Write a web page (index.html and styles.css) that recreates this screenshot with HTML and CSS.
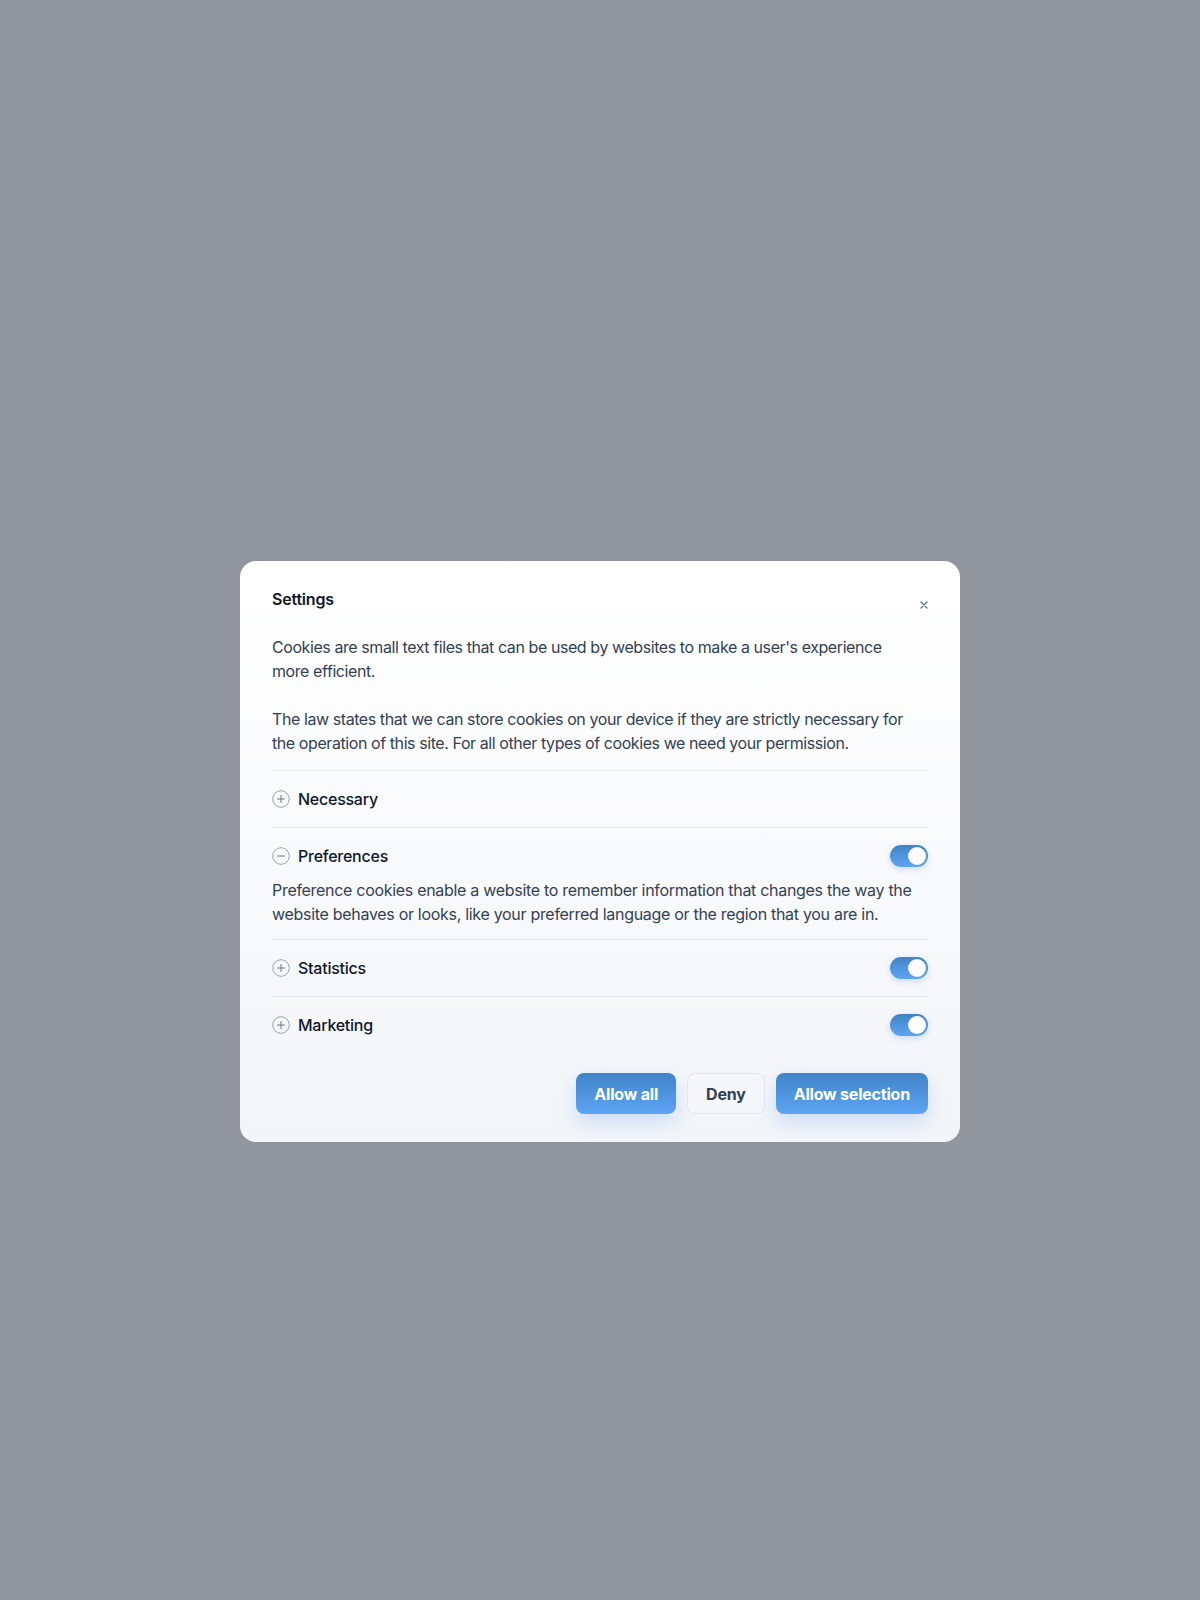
FILE: index.html
```html
<!DOCTYPE html>
<html lang="en">
<head>
    <meta charset="UTF-8">
    <meta name="viewport" content="width=device-width, initial-scale=1.0">
    <title>Cookie Settings</title>
    <link rel="stylesheet" href="styles.css">
</head>
<body>
    <div class="overlay">
        <div class="modal">
            <div class="modal-head">
                <h2 class="title">Settings</h2>
                <button class="close" aria-label="Close">
                    <svg width="8" height="8" viewBox="0 0 8 8"><path d="M1 1L7 7M7 1L1 7" stroke="#64748b" stroke-width="1.3" stroke-linecap="round"/></svg>
                </button>
            </div>

            <p class="text">Cookies are small text files that can be used by websites to make a user's experience more efficient.</p>
            <p class="text">The law states that we can store cookies on your device if they are strictly necessary for the operation of this site. For all other types of cookies we need your permission.</p>

            <div class="groups">
                <div class="group">
                    <div class="group-head">
                        <span class="toggle-icon">
                            <svg width="18" height="18" viewBox="0 0 18 18"><circle cx="9" cy="9" r="8.3" fill="none" stroke="#94a3b8" stroke-width="1"/><path d="M5.5 9H12.5M9 5.5V12.5" stroke="#64748b" stroke-width="1" stroke-linecap="round"/></svg>
                        </span>
                        <span class="label">Necessary</span>
                    </div>
                </div>

                <div class="group open">
                    <div class="group-head">
                        <span class="toggle-icon">
                            <svg width="18" height="18" viewBox="0 0 18 18"><circle cx="9" cy="9" r="8.3" fill="none" stroke="#94a3b8" stroke-width="1"/><path d="M5.5 9H12.5" stroke="#64748b" stroke-width="1" stroke-linecap="round"/></svg>
                        </span>
                        <span class="label">Preferences</span>
                        <span class="switch on"><span class="knob"></span></span>
                    </div>
                    <p class="group-desc">Preference cookies enable a website to remember information that changes the way the website behaves or looks, like your preferred language or the region that you are in.</p>
                </div>

                <div class="group">
                    <div class="group-head">
                        <span class="toggle-icon">
                            <svg width="18" height="18" viewBox="0 0 18 18"><circle cx="9" cy="9" r="8.3" fill="none" stroke="#94a3b8" stroke-width="1"/><path d="M5.5 9H12.5M9 5.5V12.5" stroke="#64748b" stroke-width="1" stroke-linecap="round"/></svg>
                        </span>
                        <span class="label">Statistics</span>
                        <span class="switch on"><span class="knob"></span></span>
                    </div>
                </div>

                <div class="group">
                    <div class="group-head">
                        <span class="toggle-icon">
                            <svg width="18" height="18" viewBox="0 0 18 18"><circle cx="9" cy="9" r="8.3" fill="none" stroke="#94a3b8" stroke-width="1"/><path d="M5.5 9H12.5M9 5.5V12.5" stroke="#64748b" stroke-width="1" stroke-linecap="round"/></svg>
                        </span>
                        <span class="label">Marketing</span>
                        <span class="switch on"><span class="knob"></span></span>
                    </div>
                </div>
            </div>

            <div class="actions">
                <button class="btn btn-primary">Allow all</button>
                <button class="btn btn-light">Deny</button>
                <button class="btn btn-primary">Allow selection</button>
            </div>
        </div>
    </div>
</body>
</html>
```

FILE: styles.css
```css
* { box-sizing: border-box; }
html, body { margin: 0; padding: 0; }
body { font-family: Inter, "Noto Sans", sans-serif; background-color: #91959e; min-height: 1600px; }

.overlay { padding-top: 561px; display: flex; justify-content: center; }

.modal { width: 720px; padding: 26px 32px 28px; border-radius: 16px; background: linear-gradient(180deg, #ffffff 0%, #f3f5f8 100%); color: #334155; }

.modal-head { display: flex; justify-content: space-between; align-items: flex-start; margin-bottom: 24px; }
.title { margin: 0; font-size: 16px; line-height: 24px; font-weight: 600; color: #0f172a; letter-spacing: -0.2px; }
.close { border: none; background: none; padding: 0; margin: 13px -1px 0 0; width: 10px; height: 10px; display: flex; align-items: center; justify-content: center; cursor: pointer; }

.text { max-width: 640px; margin: 0 0 24px; font-size: 16px; line-height: 24px; letter-spacing: -0.42px; }
.text:last-of-type { margin-bottom: 15px; }

.group { border-top: 1px solid #e2e8f0; padding: 16px 0; }
.group.open { padding-bottom: 14px; }
.group-head { display: flex; align-items: center; height: 24px; }
.toggle-icon { display: flex; width: 18px; height: 18px; margin-right: 8px; }
.label { font-size: 16px; font-weight: 500; color: #0f172a; letter-spacing: -0.25px; flex: 1; }
.group-desc { margin: 10px 0 0; font-size: 16px; line-height: 24px; letter-spacing: -0.3px; }
.group.open { padding-bottom: 13px; }

.switch { width: 38px; height: 22px; border-radius: 11px; background: linear-gradient(180deg, #3f83c8, #5ea4f2); display: flex; align-items: center; justify-content: flex-end; padding: 2px; box-shadow: 0 2px 6px rgba(59, 130, 246, 0.25); }
.knob { width: 18px; height: 18px; border-radius: 50%; background: #fff; }

.actions { display: flex; justify-content: flex-end; gap: 11px; margin-top: 20px; }
.btn { height: 41px; padding: 0 18px; border-radius: 8px; font-family: inherit; font-size: 16px; font-weight: 700; letter-spacing: -0.2px; cursor: pointer; }
.btn-primary { border: none; color: #fff; background: linear-gradient(180deg, #3f83c8 0%, #5ea4f2 100%); box-shadow: 0 8px 20px rgba(59, 130, 246, 0.22); }
.btn-light { border: 1px solid #e2e8f0; color: #334155; background: #f5f7fa; }
```
